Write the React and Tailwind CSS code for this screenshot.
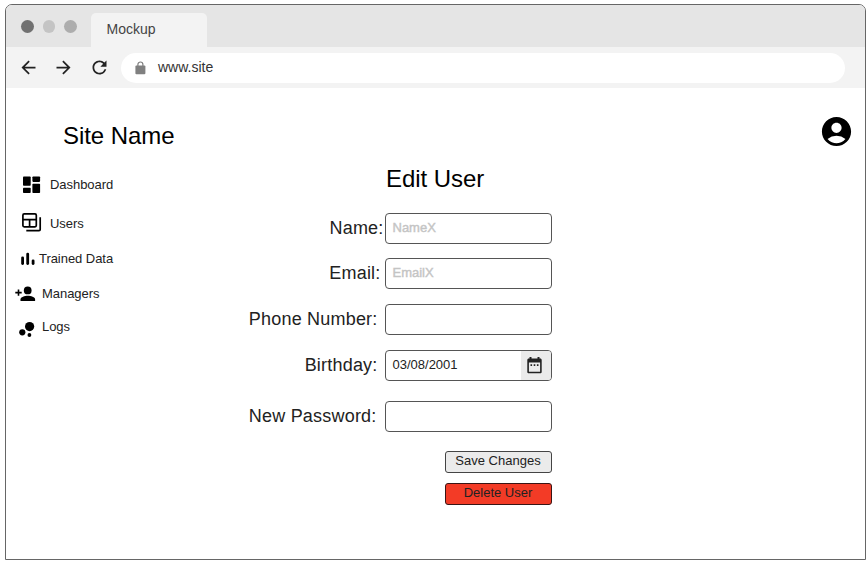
import React from "react";
import {
  MdAccountCircle,
  MdArrowBack,
  MdArrowForward,
  MdRefresh,
} from "react-icons/md";

function DashboardIcon() {
  return (
    <svg width="18" height="18" viewBox="0 0 18 18">
      <rect x="0" y="0.5" width="7.7" height="9.3" rx="0.8" />
      <rect x="9.4" y="0.5" width="7.7" height="5.4" rx="0.8" />
      <rect x="0" y="11.7" width="7.7" height="5.4" rx="0.8" />
      <rect x="9.4" y="7.8" width="7.7" height="9.3" rx="0.8" />
    </svg>
  );
}

function TableStackIcon() {
  return (
    <svg width="20" height="19" viewBox="0 0 20 19" fill="none" stroke="#000" strokeWidth="1.7">
      <rect x="0.9" y="0.9" width="13.4" height="13" rx="1.3" />
      <path d="M1 6.600h13.300M7.600 6.600v7.300M18.200 4.200v12.200q0 1.200-1.200 1.200H4.300" />
    </svg>
  );
}

function BarsIcon() {
  return (
    <svg width="14" height="14" viewBox="0 0 14 14">
      <rect x="0.2" y="4.5" width="2.8" height="8.4" rx="1.3" />
      <rect x="5.3" y="0.7" width="2.8" height="12.2" rx="1.3" />
      <rect x="10.7" y="7.4" width="2.8" height="5.5" rx="1.3" />
    </svg>
  );
}

function AddPersonIcon() {
  return (
    <svg width="21" height="16" viewBox="0 0 21 16">
      <circle cx="12.7" cy="4.4" r="3.9" />
      <path d="M5.500 15v-1.500c0-2.400 4.200-3.700 7.300-3.700s7.300 1.300 7.300 3.700V15z" />
      <path d="M3.500 3.400v6.400M0.300 6.600h6.400" stroke="#000" strokeWidth="1.6" />
    </svg>
  );
}

function BubblesIcon() {
  return (
    <svg width="16" height="16" viewBox="0 0 16 16" className="mt-[3px]">
      <circle cx="10.600" cy="5.600" r="4.600" />
      <circle cx="3.300" cy="11.300" r="3.100" />
      <circle cx="10.400" cy="14" r="1.900" />
    </svg>
  );
}

function LockIcon() {
  return (
    <svg width="11" height="14" viewBox="0 0 11 14">
      <rect x="0.4" y="4.6" width="10" height="8.600" rx="1" fill="#808080" />
      <path d="M2.900 5V3.500a2.500 2.500 0 0 1 5 0V5" fill="none" stroke="#808080" strokeWidth="1.2" />
    </svg>
  );
}

function CalendarIcon() {
  return (
    <svg width="15" height="17" viewBox="0 0 15 17" fill="#222">
      <path d="M2.500 0h2v1.600h6V0h2v1.600h.7c.9 0 1.500.7 1.500 1.500v11.600c0 .9-.6 1.600-1.500 1.600H1.800C.9 16.300.3 15.600.3 14.700V3.100c0-.8.6-1.500 1.500-1.500h.7zM1.900 5.600v9.100h11.200V5.600z" />
      <path d="M3.500 7.300h1.600v1.600H3.500zM6.700 7.300h1.600v1.600H6.700zM9.900 7.300h1.600v1.600H9.900z" />
    </svg>
  );
}

function NavItem({ className, gap, icon, label }) {
  return (
    <a className={`flex h-5 items-center ${className}`}>
      {icon}
      <span className={`text-[13px] leading-4 tracking-[-0.05px] ${gap}`}>{label}</span>
    </a>
  );
}

function Field({ label, labelClass, className, children }) {
  return (
    <div className={`flex h-[31px] ${className}`}>
      <label className={`w-[149px] shrink-0 text-right text-[18px] leading-[31px] tracking-[0.2px] whitespace-nowrap ${labelClass}`}>
        {label}
      </label>
      <div className="flex w-[167px] shrink-0 overflow-hidden rounded-[4px] border border-[#555] bg-white pl-[7px] text-[13px] leading-[27px]">
        {children}
      </div>
    </div>
  );
}

export default function App() {
  return (
    <div className="h-[565px] w-[868px] overflow-hidden bg-white pt-1 pl-[5px] font-['Liberation_Sans',Arial,sans-serif] text-[#222]">
      <div className="flex h-[556px] w-[861px] flex-col overflow-hidden rounded-t-[7px] border border-[#666] bg-white">
        <header className="flex h-[42px] shrink-0 bg-[#e5e5e5]">
          <div className="flex gap-[9px] pt-[15px] pl-[15px]">
            <span className="size-[12.5px] rounded-full bg-[#717171]" />
            <span className="size-[12.5px] rounded-full bg-[#c4c4c4]" />
            <span className="size-[12.5px] rounded-full bg-[#adadad]" />
          </div>
          <div className="mt-2 ml-[14px] h-[34px] w-[116px] rounded-t-[5px] bg-[#f3f3f3] pl-4 text-[14px] leading-[33px] text-[#444]">
            Mockup
          </div>
        </header>
        <div className="flex h-[41px] shrink-0 items-center bg-[#f3f3f3]">
          <MdArrowBack size={21} className="ml-[12px]" />
          <MdArrowForward size={21} className="ml-[14px]" />
          <MdRefresh size={21} className="ml-[15px]" />
          <div className="ml-[11px] flex h-[30px] w-[724px] items-center rounded-full bg-white pl-[14px]">
            <LockIcon />
            <span className="ml-[12px] text-[14px] leading-4 text-[#333] -mt-px">www.site</span>
          </div>
        </div>
        <div className="flex min-h-0 flex-1">
          <aside className="w-[241px] shrink-0">
            <h1 className="mt-[34px] ml-[57px] text-[24px] leading-[28px] tracking-[-0.05px] text-black">Site Name</h1>
            <nav className="fill-black">
              <NavItem className="mt-[25px] pl-[17px]" gap="ml-[9px]" label="Dashboard" icon={<DashboardIcon />} />
              <NavItem className="mt-[19px] pl-[16px]" gap="ml-[8px]" label="Users" icon={<span className="-mt-[3px]"><TableStackIcon /></span>} />
              <NavItem className="mt-[15px] pl-[15px]" gap="ml-[4px]" label="Trained Data" icon={<BarsIcon />} />
              <NavItem className="mt-[15px] pl-[9px]" gap="ml-[6px]" label="Managers" icon={<AddPersonIcon />} />
              <NavItem className="mt-[13px] pl-[13px]" gap="ml-[7px]" label="Logs" icon={<BubblesIcon />} />
            </nav>
          </aside>
          <main className="w-[305px] shrink-0">
            <h2 className="mt-[77px] ml-[139px] text-[24px] leading-[28px] tracking-[-0.05px] whitespace-nowrap text-black">Edit User</h2>
            <form className="-ml-[11.5px] w-[316px]">
              <Field label="Name:" labelClass="pr-[1px]" className="mt-[20px]">
                <span className="text-[#c4c4c4] [-webkit-text-stroke:0.4px_#c4c4c4]">NameX</span>
              </Field>
              <Field label="Email:" labelClass="pr-[4px]" className="mt-[14px]">
                <span className="text-[#c4c4c4] [-webkit-text-stroke:0.4px_#c4c4c4]">EmailX</span>
              </Field>
              <Field label="Phone Number:" labelClass="pr-[7px]" className="mt-[15px]" />
              <Field label="Birthday:" labelClass="pr-[7px]" className="mt-[15px]">
                <span>03/08/2001</span>
                <span className="ml-auto flex w-[30px] items-center justify-center bg-[#ebebeb] pr-[2px]">
                  <CalendarIcon />
                </span>
              </Field>
              <Field label="New Password:" labelClass="pr-[8px]" className="mt-[20px]" />
              <div className="mt-[19px] flex flex-col items-end gap-[10px]">
                <button type="button" className="h-[22px] w-[107px] rounded-[3px] border border-[#444] bg-[#ebebeb] pb-[3px] text-[13px] leading-[16px]">
                  Save Changes
                </button>
                <button type="button" className="h-[22px] w-[107px] rounded-[3px] border border-[#3a1515] bg-[#f33b26] pb-[4px] text-[13px] leading-[15px]">
                  Delete User
                </button>
              </div>
            </form>
          </main>
          <div className="mt-[26px] mr-[11px] ml-auto">
            <MdAccountCircle size={35} className="text-black" />
          </div>
        </div>
      </div>
    </div>
  );
}
